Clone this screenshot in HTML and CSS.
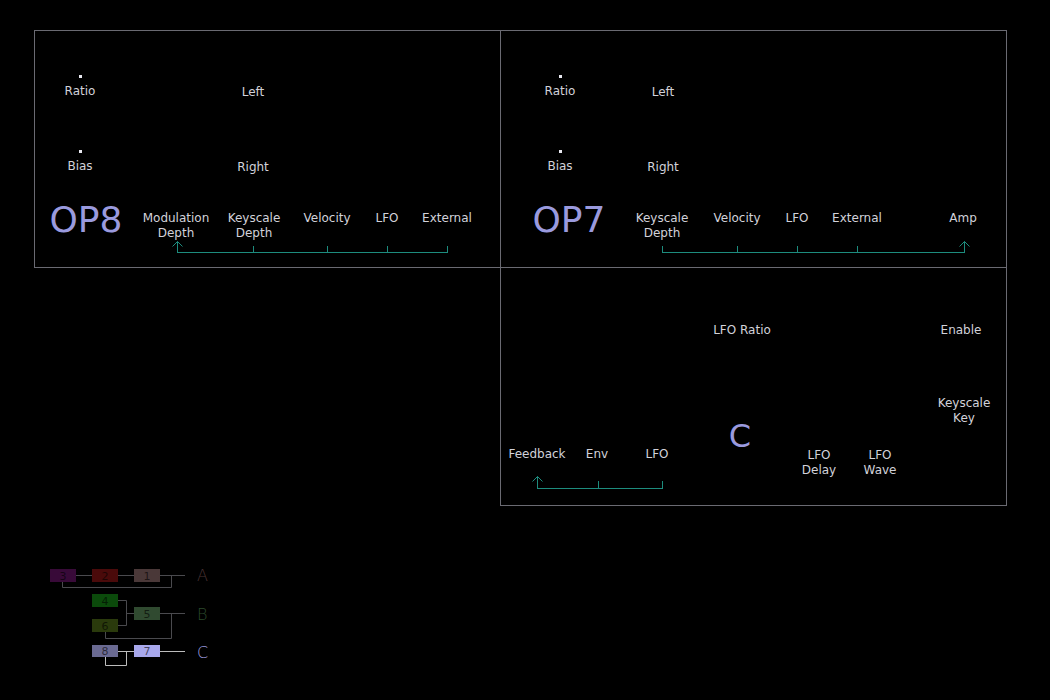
FILE: index.html
```html
<!DOCTYPE html>
<html lang="en">
<head>
<meta charset="utf-8">
<title>FM Operator Panel</title>
<link rel="stylesheet" href="styles.css">
</head>
<body>
<main class="page">
  <div class="rack">
    <section class="panel op8">
      <div class="row r1">
        <div class="k ratio"><span class="dot"></span><span class="lbl">Ratio</span></div>
        <div class="k pan plain"><span class="lbl">Left</span></div>
      </div>
      <div class="row r2">
        <div class="k ratio"><span class="dot"></span><span class="lbl">Bias</span></div>
        <div class="k pan plain"><span class="lbl">Right</span></div>
      </div>
      <div class="row r3">
        <div class="k title"><span class="big">OP8</span></div>
        <div class="k mod"><span class="lbl">Modulation<br>Depth</span></div>
        <div class="k ksd"><span class="lbl">Keyscale<br>Depth</span></div>
        <div class="k vel"><span class="lbl">Velocity</span></div>
        <div class="k lfo"><span class="lbl">LFO</span></div>
        <div class="k ext"><span class="lbl">External</span></div>
      </div>
      <svg class="bracket" width="465" height="14" viewBox="0 0 465 14">
        <path d="M142 12.5H413M142.5 1.5V12M218.5 6V12M292.5 6V12M352.5 6V12M412.5 6V12M137.5 6.5L142.5 1.5L147.5 6.5"/>
      </svg>
    </section>

    <section class="panel op7">
      <div class="row r1">
        <div class="k ratio"><span class="dot"></span><span class="lbl">Ratio</span></div>
        <div class="k pan plain"><span class="lbl">Left</span></div>
      </div>
      <div class="row r2">
        <div class="k ratio"><span class="dot"></span><span class="lbl">Bias</span></div>
        <div class="k pan plain"><span class="lbl">Right</span></div>
      </div>
      <div class="row r3">
        <div class="k title"><span class="big">OP7</span></div>
        <div class="k ksd"><span class="lbl">Keyscale<br>Depth</span></div>
        <div class="k vel"><span class="lbl">Velocity</span></div>
        <div class="k lfo"><span class="lbl">LFO</span></div>
        <div class="k ext"><span class="lbl">External</span></div>
        <div class="k amp"><span class="lbl">Amp</span></div>
      </div>
      <svg class="bracket" width="505" height="14" viewBox="0 0 505 14">
        <path d="M161 12.5H464M161.5 6V12M236.5 6V12M296.5 6V12M356.5 6V12M463.5 1.5V12M458.5 6.5L463.5 1.5L468.5 6.5"/>
      </svg>
    </section>

    <section class="panel common">
      <div class="row ra">
        <div class="k lforatio"><span class="lbl">LFO Ratio</span></div>
        <div class="k enable"><span class="lbl">Enable</span></div>
      </div>
      <div class="row rc">
        <div class="k fb low"><span class="lbl">Feedback</span></div>
        <div class="k env low"><span class="lbl">Env</span></div>
        <div class="k clfo low"><span class="lbl">LFO</span></div>
        <div class="k ctitle"><span class="big small">C</span></div>
        <div class="k delay lower"><span class="lbl">LFO<br>Delay</span></div>
        <div class="k wave lower"><span class="lbl">LFO<br>Wave</span></div>
        <div class="k kskey"><span class="lbl">Keyscale<br>Key</span></div>
      </div>
      <svg class="bracket" width="505" height="15" viewBox="0 0 505 15">
        <path d="M36 13.5H162M36.5 1.5V13M97.5 6V13M161.5 6V13M31.5 6.5L36.5 1.5L41.5 6.5"/>
      </svg>
    </section>
  </div>

  <svg class="routing" width="180" height="110" viewBox="0 0 180 110">
    <g class="wire wa">
      <path d="M36 15.5H145M22.5 22V27.5H131.5V15.5"/>
    </g>
    <g class="wire wb">
      <path d="M78 40.5H86.5V65.5H78M86.5 53.5H94M120 53.5H145M65.5 72V78.5H131.5V53.5"/>
    </g>
    <g class="wire wc">
      <path d="M78 91.5H94M120 91.5H145M65.5 97V105.5H86.5V91.5"/>
    </g>
    <rect class="b3" x="10" y="9" width="26" height="13"/>
    <rect class="b2" x="52" y="9" width="26" height="13"/>
    <rect class="b1" x="94" y="9" width="26" height="13"/>
    <rect class="b4" x="52" y="34" width="26" height="13"/>
    <rect class="b6" x="52" y="59" width="26" height="13"/>
    <rect class="b5" x="94" y="47" width="26" height="13"/>
    <rect class="b8" x="52" y="85" width="26" height="12"/>
    <rect class="b7" x="94" y="85" width="26" height="12"/>
    <text class="num" x="23" y="19.5">3</text>
    <text class="num" x="65" y="19.5">2</text>
    <text class="num" x="107" y="19.5">1</text>
    <text class="num" x="65" y="44.5">4</text>
    <text class="num" x="65" y="69.5">6</text>
    <text class="num" x="107" y="57.5">5</text>
    <text class="num" x="65" y="95">8</text>
    <text class="num" x="107" y="95">7</text>
    <text class="grp ga" x="157" y="21">A</text>
    <text class="grp gb" x="157" y="60">B</text>
    <text class="grp gc" x="157" y="98">C</text>
  </svg>
</main>
</body>
</html>
```

FILE: styles.css
```css
* { box-sizing: border-box; }

html, body {
  margin: 0;
  background: #000;
}

body {
  font-family: "DejaVu Sans", "Noto Sans", sans-serif;
  font-size: 12px;
  line-height: 15px;
  color: #d2d2da;
  height: 700px;
  overflow: hidden;
}

.page {
  padding-top: 30px;
}

/* ---------- panel grid ---------- */
.rack {
  margin-left: 34px;
  display: grid;
  grid-template-columns: 466px 507px;
  grid-template-rows: 238px 238px;
}

.panel {
  border: 1px solid #6a6a72;
}

.op8 {
  grid-column: 1;
  grid-row: 1;
  border-right: 0;
}

.op7 {
  grid-column: 2;
  grid-row: 1;
}

.common {
  grid-column: 2;
  grid-row: 2;
  border-top: 0;
}

/* ---------- rows of controls ---------- */
.row {
  display: flex;
  align-items: flex-start;
}

.r1 { margin-top: 44px; height: 22px; }
.r2 { margin-top: 53px; height: 22px; }
.r3 { margin-top: 27px; height: 41px; }

.ra { margin-top: 55px; height: 15px; }
.rc { margin-top: 57px; height: 80px; }

/* a control: zero-width column, content centred on it */
.k {
  width: 0;
  flex: none;
  display: flex;
  flex-direction: column;
  align-items: center;
}

.plain { padding-top: 10px; }
.r3 .k { padding-top: 12px; }
.r3 .k.title { padding-top: 0; }

.dot {
  display: block;
  width: 3px;
  height: 3px;
  background: #e8e8f0;
  margin-bottom: 6px;
}

.lbl {
  display: block;
  white-space: nowrap;
  text-align: center;
}

.big {
  display: block;
  white-space: nowrap;
  font-size: 36px;
  line-height: 42px;
  color: #9a9ade;
}

.big.small {
  font-size: 32px;
  line-height: 37px;
}

/* OP8 spacing (distance between control centres) */
.op8 .ratio { margin-left: 45px; }
.op8 .pan   { margin-left: 173px; }
.op8 .title { margin-left: 51px; }
.op8 .mod   { margin-left: 90px; }
.op8 .ksd   { margin-left: 78px; }
.op8 .vel   { margin-left: 73px; }
.op8 .lfo   { margin-left: 60px; }
.op8 .ext   { margin-left: 60px; }

/* OP7 spacing */
.op7 .ratio { margin-left: 59px; }
.op7 .pan   { margin-left: 103px; }
.op7 .title { margin-left: 68px; }
.op7 .ksd   { margin-left: 93px; }
.op7 .vel   { margin-left: 75px; }
.op7 .lfo   { margin-left: 60px; }
.op7 .ext   { margin-left: 60px; }
.op7 .amp   { margin-left: 106px; }

/* common (C) panel */
.lforatio { margin-left: 241px; }
.enable   { margin-left: 219px; }

.fb     { margin-left: 36px; }
.env    { margin-left: 60px; }
.clfo   { margin-left: 60px; }
.ctitle { margin-left: 83px; padding-top: 23px; }
.delay  { margin-left: 79px; }
.wave   { margin-left: 61px; }
.kskey  { margin-left: 84px; padding-top: 1px; }

.low   { padding-top: 52px; }
.lower { padding-top: 53px; }

/* modulation brackets */
.bracket {
  display: block;
  overflow: visible;
}

.bracket path {
  fill: none;
  stroke: #1d8c7e;
  stroke-width: 1;
}

/* ---------- routing diagram ---------- */
.routing {
  display: block;
  margin: 54px 0 0 40px;
}

.wire path {
  fill: none;
  stroke-width: 1;
}

.wa path, .wb path { stroke: #4a4a4e; }
.wc path { stroke: #bcbcbc; }

.b3 { fill: #380a38; }
.b2 { fill: #4a0a0a; }
.b1 { fill: #4a3838; }
.b4 { fill: #0b4a0b; }
.b6 { fill: #2a3a0c; }
.b5 { fill: #304a30; }
.b8 { fill: #6a6a92; }
.b7 { fill: #a8a8ec; }

.num {
  font-family: "DejaVu Sans", sans-serif;
  font-size: 11px;
  text-anchor: middle;
  fill: rgba(0, 0, 0, 0.62);
}

.grp {
  font-family: "DejaVu Sans", sans-serif;
  font-size: 16px;
  font-weight: 200;
}

.ga { fill: #4c3434; }
.gb { fill: #2c4a2c; }
.gc { fill: #9a9ade; }
```
